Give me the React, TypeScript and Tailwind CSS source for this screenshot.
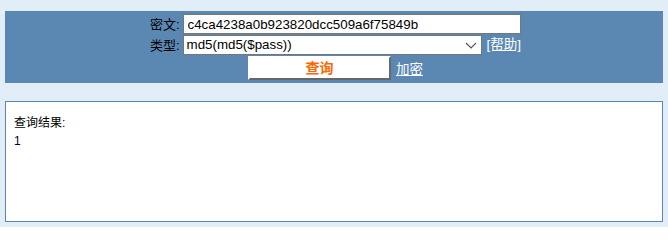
import React from "react";

export default function App() {
  const font = { fontFamily: '"Liberation Sans", "Noto Sans CJK SC", Arial, sans-serif' };
  return (
    <div className="min-h-[227px] w-full bg-[#e1edf7] px-[5px] pt-[11px] pb-[5px]" style={font}>
      <div className="flex justify-center bg-[#5b87b3] py-[3px] pl-[3px]">
        <div className="grid grid-cols-[auto_auto] items-center gap-x-[3px] text-[13px] leading-none">
          <div className="text-right text-black">密文:</div>
          <input
            className="h-[20px] w-[338px] border border-[#767676] bg-white px-[4px] text-[13.33px] text-black outline-none"
            defaultValue="c4ca4238a0b923820dcc509a6f75849b"
            style={font}
          />
          <div className="mt-[2px] text-right text-black">类型:</div>
          <div className="mt-[1px] flex items-center">
            <div className="relative h-[20px] w-[299px] border border-[#767676] bg-white">
              <select
                className="h-full w-full appearance-none bg-white pl-[3px] text-[13.33px] text-black outline-none"
                defaultValue="md5md5"
                style={font}
              >
                <option value="md5md5">md5(md5($pass))</option>
              </select>
              <svg
                className="pointer-events-none absolute right-[3px] top-[4px]"
                width="14"
                height="10"
                viewBox="0 0 14 10"
              >
                <path d="M2 3 L7 8 L12 3" fill="none" stroke="#555" strokeWidth="1.2" />
              </svg>
            </div>
            <a href="#" className="ml-[5px] text-[13.5px] text-white underline">[帮助]</a>
          </div>
          <div className="col-span-2 flex items-end justify-center">
            <button
              className="mt-[1px] h-[24px] w-[143px] border-2 border-b-[#686868] border-l-white border-r-[#686868] border-t-white bg-white text-[14px] font-bold text-[#ff6600]"
              style={font}
            >
              查询
            </button>
            <a href="#" className="mb-[4px] ml-[5px] text-[13.5px] text-white underline">加密</a>
          </div>
        </div>
      </div>
      <div className="mt-[18px] h-[121px] border border-[#5b87b3] bg-white px-[8px] pt-[12px] text-[12px] leading-[18px] text-black">
        <div>查询结果:</div>
        <div className="text-[#000033]">1</div>
      </div>
    </div>
  );
}
